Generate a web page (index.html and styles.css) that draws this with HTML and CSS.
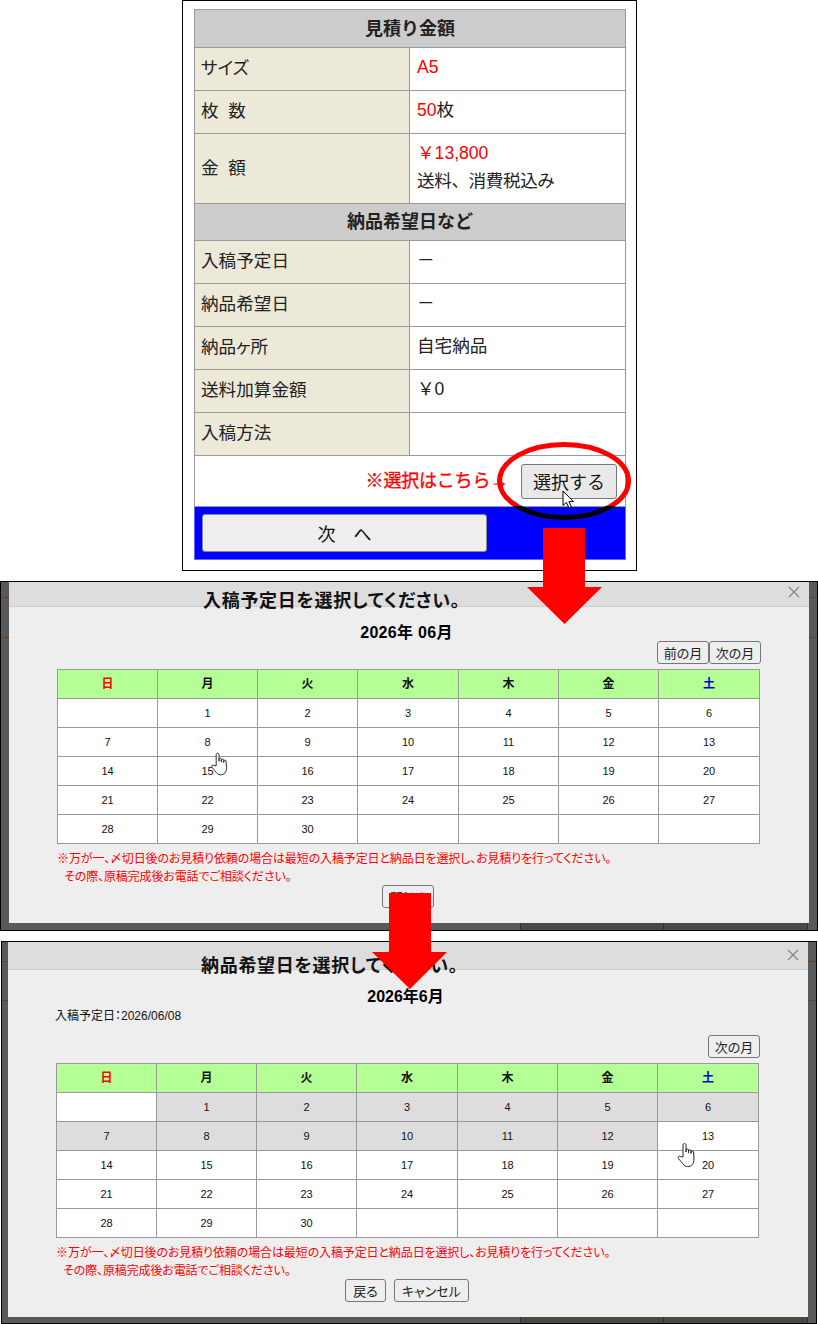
FILE: index.html
```html
<!DOCTYPE html>
<html lang="ja">
<head>
<meta charset="utf-8">
<title>見積り金額</title>
<link rel="stylesheet" href="styles.css">
</head>
<body>
<div class="page">
  <section class="estimate">
    <table class="quote">
      <colgroup><col class="quote-label-col"><col></colgroup>
      <tr class="h-head"><th colspan="2" class="section">見積り金額</th></tr>
      <tr class="h-row"><td class="label">サイズ</td><td class="value"><span class="red">A5</span></td></tr>
      <tr class="h-row"><td class="label">枚&nbsp;&nbsp;数</td><td class="value"><span class="red">50</span>枚</td></tr>
      <tr class="h-tall"><td class="label">金&nbsp;&nbsp;額</td><td class="value"><span class="red full">￥13,800</span><br><span class="full tight">送料、消費税込み</span></td></tr>
      <tr class="h-head2"><th colspan="2" class="section">納品希望日など</th></tr>
      <tr class="h-row"><td class="label">入稿予定日</td><td class="value">－</td></tr>
      <tr class="h-row"><td class="label">納品希望日</td><td class="value">－</td></tr>
      <tr class="h-row"><td class="label">納品ヶ所</td><td class="value">自宅納品</td></tr>
      <tr class="h-row"><td class="label">送料加算金額</td><td class="value"><span class="full">￥0</span></td></tr>
      <tr class="h-row"><td class="label">入稿方法</td><td class="value"></td></tr>
      <tr class="h-select"><td colspan="2" class="select-cell">
        <div class="select-line"><span class="hint">※選択はこちら→</span><button class="btn-select" type="button">選択する</button></div>
      </td></tr>
      <tr class="h-next"><td colspan="2" class="next-cell"><button class="btn-next" type="button">次　へ</button></td></tr>
    </table>
  </section>

  <section class="screen screen-a">
    <div class="modal">
      <div class="titlebar titlebar-a">
        <h2 class="title title-a">入稿予定日を選択してください。</h2>
        <svg class="close" viewBox="0 0 12 12"><path d="M1 1 11 11M11 1 1 11"/></svg>
      </div>
      <div class="month month-a">2026年 06月</div>
      <div class="toolbar toolbar-a"><button class="btn" type="button">前の月</button><button class="btn" type="button">次の月</button></div>
      <table class="cal">
        <tr><th class="sun">日</th><th>月</th><th>火</th><th>水</th><th>木</th><th>金</th><th class="sat">土</th></tr>
        <tr><td></td><td>1</td><td>2</td><td>3</td><td>4</td><td>5</td><td>6</td></tr>
        <tr><td>7</td><td>8</td><td>9</td><td>10</td><td>11</td><td>12</td><td>13</td></tr>
        <tr><td>14</td><td>15</td><td>16</td><td>17</td><td>18</td><td>19</td><td>20</td></tr>
        <tr><td>21</td><td>22</td><td>23</td><td>24</td><td>25</td><td>26</td><td>27</td></tr>
        <tr><td>28</td><td>29</td><td>30</td><td></td><td></td><td></td><td></td></tr>
      </table>
      <p class="note">※万が一、〆切日後のお見積り依頼の場合は最短の入稿予定日と納品日を選択し、お見積りを行ってください。<br><span class="note-indent">その際、原稿完成後お電話でご相談ください。</span></p>
      <div class="actions"><button class="btn" type="button">閉じる</button></div>
    </div>
  </section>

  <section class="screen screen-b">
    <div class="modal">
      <div class="titlebar titlebar-b">
        <h2 class="title title-b">納品希望日を選択してください。</h2>
        <svg class="close" viewBox="0 0 12 12"><path d="M1 1 11 11M11 1 1 11"/></svg>
      </div>
      <div class="month month-b">2026年6月</div>
      <div class="info">入稿予定日：2026/06/08</div>
      <div class="toolbar toolbar-b"><button class="btn" type="button">次の月</button></div>
      <table class="cal">
        <tr><th class="sun">日</th><th>月</th><th>火</th><th>水</th><th>木</th><th>金</th><th class="sat">土</th></tr>
        <tr><td></td><td class="off">1</td><td class="off">2</td><td class="off">3</td><td class="off">4</td><td class="off">5</td><td class="off">6</td></tr>
        <tr><td class="off">7</td><td class="off">8</td><td class="off">9</td><td class="off">10</td><td class="off">11</td><td class="off">12</td><td>13</td></tr>
        <tr><td>14</td><td>15</td><td>16</td><td>17</td><td>18</td><td>19</td><td>20</td></tr>
        <tr><td>21</td><td>22</td><td>23</td><td>24</td><td>25</td><td>26</td><td>27</td></tr>
        <tr><td>28</td><td>29</td><td>30</td><td></td><td></td><td></td><td></td></tr>
      </table>
      <p class="note">※万が一、〆切日後のお見積り依頼の場合は最短の入稿予定日と納品日を選択し、お見積りを行ってください。<br><span class="note-indent">その際、原稿完成後お電話でご相談ください。</span></p>
      <div class="actions"><button class="btn" type="button">戻る</button><button class="btn" type="button">キャンセル</button></div>
    </div>
  </section>

  <svg class="ring" viewBox="0 0 134 78">
    <defs><linearGradient id="ringStroke" gradientUnits="userSpaceOnUse" x1="0" y1="0" x2="0" y2="78">
      <stop offset="0.82" stop-color="#f00"/><stop offset="0.82" stop-color="#000"/>
    </linearGradient></defs>
    <ellipse cx="67" cy="39" rx="64.5" ry="36.5" fill="none" stroke="url(#ringStroke)" stroke-width="5"/>
  </svg>
  <svg class="pointer" viewBox="0 0 13 19"><path d="M1 1V15.5L4.4 12.4 7 18 9.4 17 6.9 11.6H11.5Z"/></svg>
  <svg class="arrow arrow-a" viewBox="0 0 75 96"><path d="M16 0H58V59H75L37.500 96 0 59H16Z"/></svg>
  <svg class="arrow arrow-b" viewBox="0 0 75 96"><path d="M17 0H59V59H75L38 96 0 59H17Z"/></svg>
  <svg class="hand hand-a" viewBox="0 0 17 24"><path d="M5.500 14V2C5.500 0 8.500 0 8.500 2V9 7C8.500 5.500 11 5.500 11 7V10 8C11 6.500 13.500 6.500 13.500 8V10.500 9C13.500 7.500 16 7.500 16 9L16.500 16C16.500 21 14 23.500 10 23.500 7 23.500 5.500 21 3.500 18.500L1 15.500C0 14 1.500 12.500 3 13.500Z"/></svg>
  <svg class="hand hand-b" viewBox="0 0 17 24"><path d="M5.500 14V2C5.500 0 8.500 0 8.500 2V9 7C8.500 5.500 11 5.500 11 7V10 8C11 6.500 13.500 6.500 13.500 8V10.500 9C13.500 7.500 16 7.500 16 9L16.500 16C16.500 21 14 23.500 10 23.500 7 23.500 5.500 21 3.500 18.500L1 15.500C0 14 1.500 12.500 3 13.500Z"/></svg>
</div>
</body>
</html>
```
FILE: styles.css
```css
* { box-sizing: border-box; }
html, body { margin: 0; padding: 0; background: #fff; }
body {
  font-family: "Liberation Sans", "Noto Sans CJK JP", sans-serif;
  font-feature-settings: "palt";
  color: #111;
}
.page { position: relative; width: 818px; height: 1324px; overflow: hidden; }

/* estimate sheet */
.estimate {
  width: 455px;
  height: 571px;
  margin-left: 182px;
  padding: 9px 11px 0;
  border: 1px solid #000;
}
.quote {
  width: 432px;
  table-layout: fixed;
  border-collapse: collapse;
  font-size: 17.6px;
  margin-top: -1px;
}
.quote-label-col { width: 215px; }
.quote th, .quote td { border: 1px solid #999; padding: 0; }
.quote .section {
  background: #ccc; font-size: 18px; font-weight: bold; text-align: center; color: #222;
  font-feature-settings: normal; padding-bottom: 4px;
}
.quote .label { background: #ece9d8; padding: 0 0 5px 6px; color: #222; }
.quote .value { background: #fff; padding: 0 0 4px 7px; line-height: 28px; color: #222; }
.red { color: #f00; }
.full { font-feature-settings: normal; }
.tight { letter-spacing: -0.4px; }
.h-head { height: 38px; }
.h-head2 { height: 37px; }
.h-row { height: 43px; }
.h-tall { height: 70px; }
.h-select { height: 51px; }
.h-next { height: 53px; }
.select-line { display: flex; align-items: center; justify-content: flex-end; gap: 13px; padding-right: 8px; }
.hint {
  margin-bottom: 5px;
  color: #f00; font-size: 18px; font-feature-settings: normal; letter-spacing: -0.2px;
  -webkit-text-stroke: 0.3px #f00; white-space: nowrap;
}
.btn-select {
  width: 96px; height: 35px; padding: 0;
  font: inherit; font-size: 18px; color: #111; font-feature-settings: normal;
  background: #e9e9e9; border: 1px solid #777; border-radius: 3px;
}
.quote .next-cell { background: #00f; border-color: #66f; padding: 0 0 0 7px; }
.btn-next {
  display: block; width: 285px; height: 38px; padding: 0;
  font: inherit; font-size: 18px; color: #111; font-feature-settings: normal;
  background: #eee; border: 1px solid #888; border-radius: 3px;
}

/* browser screenshots */
.screen { border: 1px solid #000; }
.screen-a {
  width: 818px; height: 350px; margin-top: 10px; padding: 0 8px;
  background:
    linear-gradient(#333, #333) 519px 100% / 1px 7px no-repeat,
    linear-gradient(#333, #333) 662px 100% / 1px 7px no-repeat,
    linear-gradient(#333, #333) 806px 100% / 1px 7px no-repeat,
    linear-gradient(#4a4a44, #4a4a44) 519px 100% / 288px 7px no-repeat,
    linear-gradient(#7a3a10, #7a3a10) 0 15px / 100% 1px no-repeat,
    linear-gradient(#7a3a10, #7a3a10) 0 55px / 100% 1px no-repeat,
    #595959;
}
.screen-b {
  width: 816px; height: 383px; margin: 10px 0 0 1px; padding: 0 8px 0 6px;
  background:
    linear-gradient(#333, #333) 518px 100% / 1px 6px no-repeat,
    linear-gradient(#333, #333) 661px 100% / 1px 6px no-repeat,
    linear-gradient(#333, #333) 805px 100% / 1px 6px no-repeat,
    linear-gradient(#4a4a44, #4a4a44) 518px 100% / 288px 6px no-repeat,
    linear-gradient(#7a3a10, #7a3a10) 0 19px / 100% 1px no-repeat,
    linear-gradient(#7a3a10, #7a3a10) 0 58px / 100% 1px no-repeat,
    #595959;
}
.modal { background: #eee; width: 800px; padding: 0 48px; }
.screen-a .modal { height: 341px; }
.screen-b .modal { height: 375px; }
.titlebar {
  position: relative;
  margin: 0 -48px;
  background: #ddd;
  border-bottom: 1px solid #ccc;
}
.titlebar-a { height: 25px; }
.titlebar-b { height: 28px; }
.title {
  position: relative;
  margin: 0;
  font-size: 18px;
  font-weight: bold;
  letter-spacing: 0.7px;
  color: #111;
  white-space: nowrap;
}
.title-a { padding-left: 194px; line-height: 38px; }
.title-b { padding-left: 193px; line-height: 48px; }
.close { position: absolute; top: 4px; right: 9px; width: 12px; height: 12px; fill: none; stroke: #888; stroke-width: 1.300; }
.titlebar-b .close { top: 7px; }
.month { text-align: center; font-weight: bold; padding-right: 5px; line-height: 20px; color: #000; font-size: 16px; }
.month-a { margin-top: 16px; letter-spacing: 0.3px; }
.month-b { margin-top: 17px; }
.info { font-size: 12px; line-height: 18px; margin-left: -1px; color: #111; }
.toolbar { display: flex; justify-content: flex-end; }
.toolbar-a { margin-top: -2px; }
.toolbar-b { margin-top: 10px; }
.btn {
  height: 23px; padding: 0 7px;
  font: inherit; font-size: 13px; color: #222;
  background: #eee; border: 1px solid #777; border-radius: 3px;
}
.toolbar .btn { width: 52px; padding: 0; }
.cal {
  width: 703px;
  margin-top: 5px;
  table-layout: fixed;
  border-collapse: collapse;
  background: #fff;
}
.cal th, .cal td { height: 29px; padding: 0; border: 1px solid #999; text-align: center; font-size: 11px; font-weight: normal; color: #111; }
.cal th { width: 100px; background: #b4ff96; font-size: 12px; font-weight: bold; padding-bottom: 3px; }
.cal th:nth-child(4), .cal th:nth-child(7) { width: 101px; }
.cal th.sun { color: #f00; }
.cal th.sat { color: #00c; }
.cal td.off { background: #ddd; }
.note { margin: 6px 0 0; font-size: 12px; line-height: 18px; letter-spacing: -0.12px; color: #f00; white-space: nowrap; }
.note-indent { margin-left: 7px; }
.actions { display: flex; justify-content: center; gap: 8px; margin: -1px 2px 0 0; }

/* annotations over the screenshot */
.ring { position: absolute; left: 497px; top: 442px; width: 134px; height: 78px; }
.pointer { position: absolute; left: 562px; top: 490px; width: 13px; height: 19px; fill: #fff; stroke: #000; stroke-width: 1; }
.arrow { position: absolute; width: 75px; height: 96px; fill: #f00; }
.arrow-a { left: 527px; top: 528px; }
.arrow-b { left: 372px; top: 893px; }
.hand { position: absolute; fill: #fff; stroke: #222; stroke-width: 1; stroke-linejoin: round; }
.hand-a { left: 211px; top: 752px; width: 16px; height: 24px; }
.hand-b { left: 677px; top: 1143px; width: 18px; height: 24px; }
```
